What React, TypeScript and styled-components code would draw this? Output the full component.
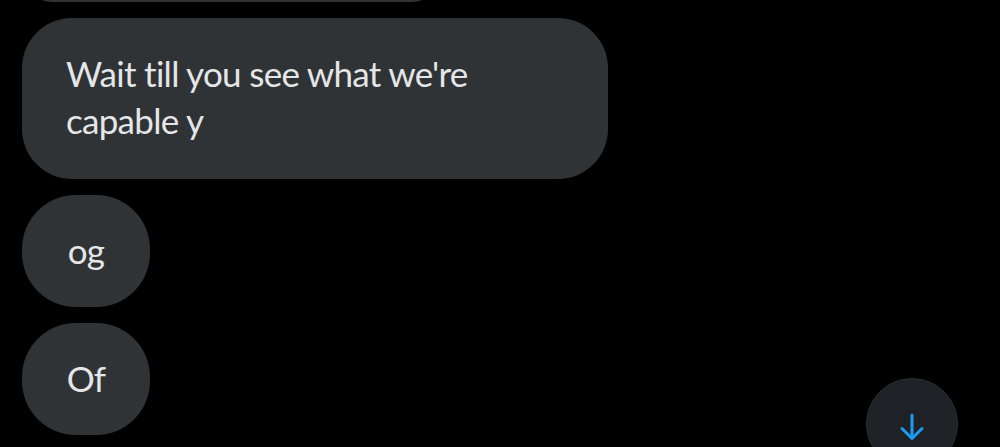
import React from "react";
import styled, { createGlobalStyle } from "styled-components";

const Global = createGlobalStyle`
  html, body {
    margin: 0;
    padding: 0;
    background: #000000;
    overflow: hidden;
  }
  body {
    font-family: Lato, Roboto, sans-serif;
    font-variant-ligatures: none;
  }
`;

const Screen = styled.div`
  position: relative;
  width: 1000px;
  height: 447px;
  overflow: hidden;
  background: #000000;
`;

const Thread = styled.div`
  display: flex;
  flex-direction: column;
  align-items: flex-start;
  gap: 16px;
  padding-left: 22px;
  margin-top: -59px;
`;

const Bubble = styled.div`
  box-sizing: border-box;
  max-width: 586px;
  min-width: 128px;
  width: fit-content;
  padding: 32px 44px 33px 44px;
  background: #2f3336;
  color: #e4e6e7;
  border-radius: 54px;
  font-size: 35px;
  line-height: 47px;
  letter-spacing: -0.7px;
  text-align: center;
`;

const WideBubble = styled(Bubble)`
  width: 586px;
  text-align: left;
  padding-bottom: 35px;
  border-radius: 50px;
`;

const GhostBubble = styled.div`
  width: 420px;
  height: 61px;
  background: #2f3336;
  border-radius: 50px;
`;

const ScrollButton = styled.button`
  position: absolute;
  left: 866px;
  top: 378px;
  width: 92px;
  height: 92px;
  border-radius: 50%;
  border: 1px solid #2a2d31;
  background: #1e2125;
  display: flex;
  align-items: flex-start;
  justify-content: center;
  padding: 34px 0 0 0;
  cursor: pointer;
`;

const ArrowDown = () => (
  <svg width="26" height="28" viewBox="0 0 26 28" fill="none">
    <path
      d="M13 2 V25 M3 15.5 L13 25.5 L23 15.5"
      stroke="#1d9bf0"
      strokeWidth="3"
      strokeLinecap="round"
      strokeLinejoin="round"
    />
  </svg>
);

export default function App() {
  return (
    <Screen>
      <Global />
      <Thread>
        <GhostBubble />
        <WideBubble>Wait till you see what we're capable y</WideBubble>
        <Bubble>og</Bubble>
        <Bubble>Of</Bubble>
      </Thread>
      <ScrollButton aria-label="Scroll to bottom">
        <ArrowDown />
      </ScrollButton>
    </Screen>
  );
}
